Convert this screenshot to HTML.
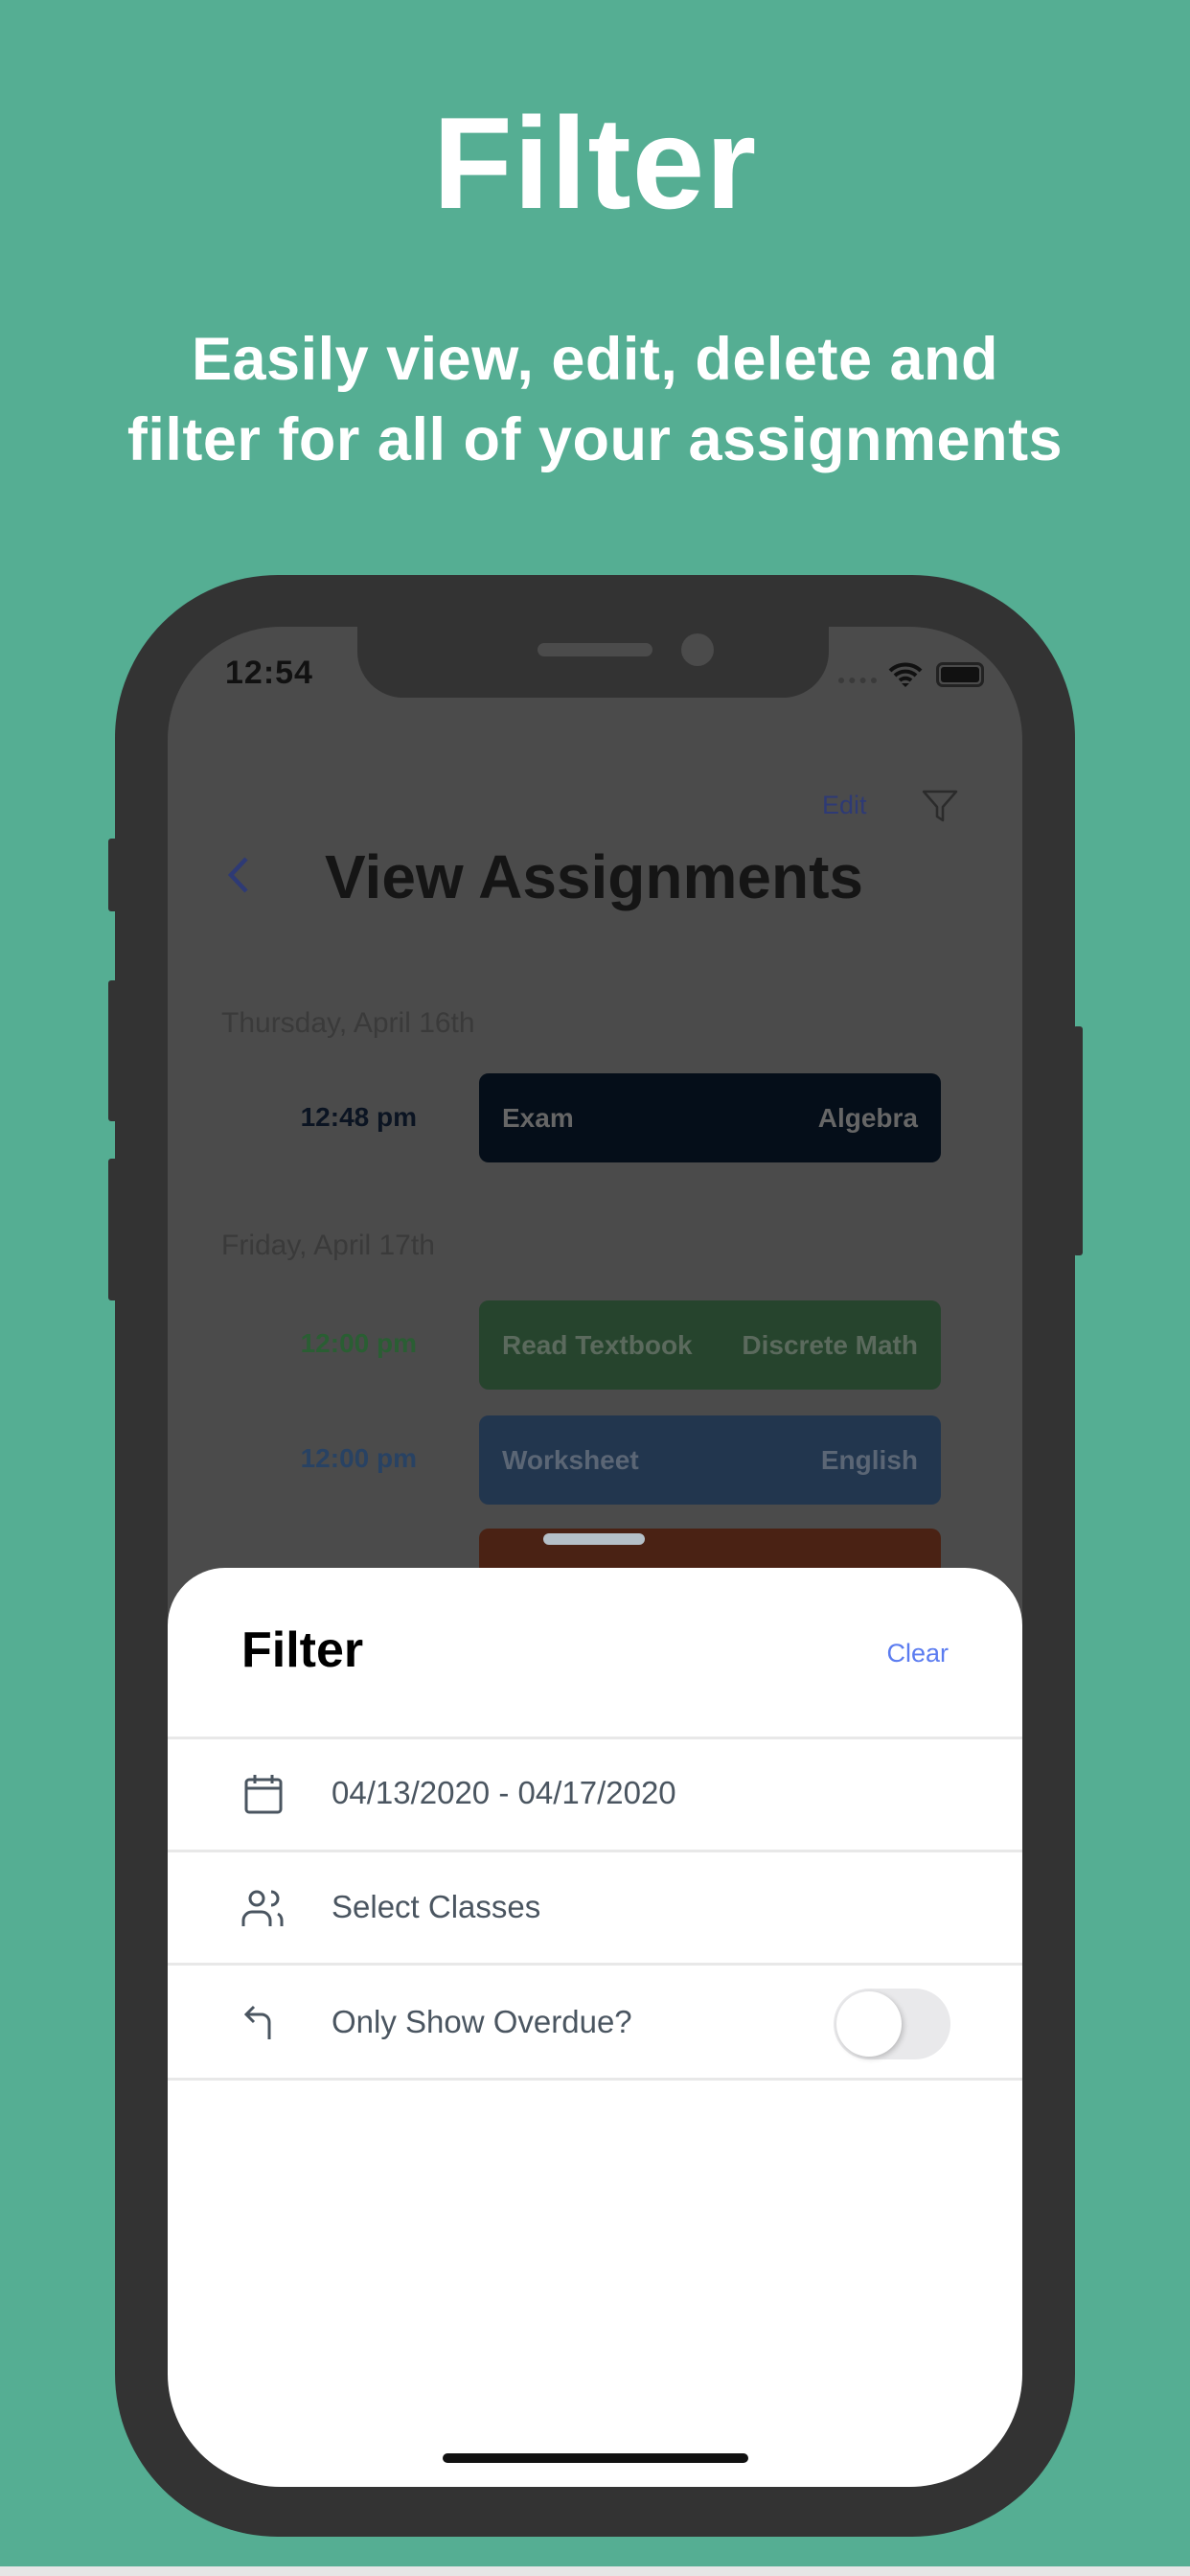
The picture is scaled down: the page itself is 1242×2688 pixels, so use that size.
<!DOCTYPE html>
<html><head><meta charset="utf-8"><style>
*{margin:0;padding:0;box-sizing:border-box}
body{width:1242px;height:2688px;background:#55ae93;position:relative;overflow:hidden;font-family:"Liberation Sans",sans-serif}
.a{position:absolute}
.h1{left:0;width:1242px;text-align:center;color:#fff;font-weight:bold}
</style></head><body>
<div class="a h1" style="top:92px;font-size:136px;letter-spacing:1px">Filter</div>
<div class="a h1" style="top:333px;font-size:63px;line-height:84px;letter-spacing:0.5px">Easily view, edit, delete and<br>filter for all of your assignments</div>

<div class="a" style="left:113px;top:875px;width:10px;height:76px;background:#333;border-radius:3px"></div>
<div class="a" style="left:113px;top:1023px;width:10px;height:147px;background:#333;border-radius:3px"></div>
<div class="a" style="left:113px;top:1209px;width:10px;height:148px;background:#333;border-radius:3px"></div>
<div class="a" style="left:1120px;top:1071px;width:10px;height:239px;background:#333;border-radius:3px"></div>
<div class="a" style="left:120px;top:600px;width:1002px;height:2047px;background:#333;border-radius:170px"></div>
<div class="a" style="left:175px;top:654px;width:892px;height:1941px;background:#4b4b4b;border-radius:118px;overflow:hidden">
  <div class="a" style="left:198px;top:0;width:492px;height:74px;background:#333;border-radius:0 0 48px 48px"></div>
  <div class="a" style="left:386px;top:17px;width:120px;height:14px;background:#4b4b4b;border-radius:7px"></div>
  <div class="a" style="left:536px;top:7px;width:34px;height:34px;background:#4b4b4b;border-radius:50%"></div>
  <div class="a" style="left:60px;top:29px;font-size:34px;font-weight:bold;color:#111;letter-spacing:1px">12:54</div>
  <div class="a" style="left:700px;top:53px;width:40px;height:6px;border-top:6px dotted #3a3a3a"></div>
  <svg class="a" style="left:752px;top:36px" width="36" height="28" viewBox="0 0 36 28"><path d="M2 10a23 23 0 0 1 32 0M7 15a16 16 0 0 1 22 0M12 20a9 9 0 0 1 12 0" stroke="#111" stroke-width="4" fill="none"/><path d="M14 23l4 4 4-4z" fill="#111"/></svg>
  <div class="a" style="left:802px;top:37px;width:50px;height:26px;border:3px solid #222;border-radius:7px;padding:2px"><div style="width:100%;height:100%;background:#111;border-radius:3px"></div></div>
  <div class="a" style="left:683px;top:171px;font-size:27px;color:#2e3a75">Edit</div>
  <svg class="a" style="left:787px;top:170px" width="38" height="34" viewBox="0 0 38 34"><path d="M2 2h34L22 18v14l-6-4V18z" stroke="#2b2b2b" stroke-width="2.5" fill="none" stroke-linejoin="round"/></svg>
  <svg class="a" style="left:62px;top:239px" width="24" height="40" viewBox="0 0 24 40"><path d="M20 3L4 20l16 17" stroke="#2e3a75" stroke-width="4.5" fill="none"/></svg>
  <div class="a" style="left:164px;top:224px;font-size:64px;font-weight:bold;color:#151515;letter-spacing:0px">View Assignments</div>
  <div class="a" style="left:56px;top:397px;font-size:30px;color:#3a3a3a">Thursday, April 16th</div>
  <div class="a" style="left:56px;top:629px;font-size:30px;color:#3a3a3a">Friday, April 17th</div>
  <div class="a" style="left:0;width:260px;text-align:right;top:496px;font-size:28px;font-weight:bold;color:#0b1422">12:48 pm</div>
  <div class="a" style="left:0;width:260px;text-align:right;top:732px;font-size:28px;font-weight:bold;color:#2a5e33">12:00 pm</div>
  <div class="a" style="left:0;width:260px;text-align:right;top:852px;font-size:28px;font-weight:bold;color:#284263">12:00 pm</div>
  <div class="a" style="left:325px;top:466px;width:482px;height:93px;background:#050e19;border-radius:10px;display:flex;justify-content:space-between;align-items:center;padding:0 24px;font-size:28px;font-weight:bold;color:#666"><span>Exam</span><span>Algebra</span></div>
  <div class="a" style="left:325px;top:703px;width:482px;height:93px;background:#26442d;border-radius:10px;display:flex;justify-content:space-between;align-items:center;padding:0 24px;font-size:28px;font-weight:bold;color:#5b6a5d"><span>Read Textbook</span><span>Discrete Math</span></div>
  <div class="a" style="left:325px;top:823px;width:482px;height:93px;background:#22364e;border-radius:10px;display:flex;justify-content:space-between;align-items:center;padding:0 24px;font-size:28px;font-weight:bold;color:#5b6675"><span>Worksheet</span><span>English</span></div>
  <div class="a" style="left:325px;top:941px;width:482px;height:93px;background:#4a2214;border-radius:10px"></div>
  <div class="a" style="left:392px;top:946px;width:106px;height:12px;background:#b5c0c8;border-radius:6px"></div>
  <div class="a" style="left:0;top:982px;width:892px;height:1000px;background:#fff;border-radius:60px 60px 0 0">
    <div class="a" style="left:77px;top:56px;font-size:52px;font-weight:bold;color:#000">Filter</div>
    <div class="a" style="right:77px;top:74px;font-size:27px;color:#5b7cf0">Clear</div>
    <div class="a" style="left:0;top:176px;width:892px;height:3px;background:#e8e8e8"></div>
    <div class="a" style="left:0;top:294px;width:892px;height:3px;background:#e8e8e8"></div>
    <div class="a" style="left:0;top:412px;width:892px;height:3px;background:#e8e8e8"></div>
    <div class="a" style="left:0;top:532px;width:892px;height:3px;background:#e8e8e8"></div>
    <svg class="a" style="left:77px;top:214px" width="44" height="44" viewBox="0 0 44 44"><rect x="5" y="7" width="36" height="34" rx="3" stroke="#4a5560" stroke-width="3" fill="none"/><path d="M5 16h36M14 2v9M32 2v9" stroke="#4a5560" stroke-width="3"/></svg>
    <div class="a" style="left:171px;top:216px;font-size:33px;color:#4a5560">04/13/2020 - 04/17/2020</div>
    <svg class="a" style="left:75px;top:334px" width="50" height="42" viewBox="0 0 50 42"><circle cx="18" cy="11" r="7" stroke="#4a5560" stroke-width="3" fill="none"/><path d="M4 40v-6a9 9 0 0 1 9-9h10a9 9 0 0 1 9 9v6M33 4a7 7 0 0 1 0 14M40 27a8 8 0 0 1 4 7v6" stroke="#4a5560" stroke-width="3" fill="none"/></svg>
    <div class="a" style="left:171px;top:335px;font-size:33px;color:#4a5560">Select Classes</div>
    <svg class="a" style="left:78px;top:454px" width="40" height="40" viewBox="0 0 40 40"><path d="M12 4L4 12l8 8M4 12h16a8 8 0 0 1 8 8v18" stroke="#4a5560" stroke-width="3" fill="none"/></svg>
    <div class="a" style="left:171px;top:455px;font-size:33px;color:#4a5560">Only Show Overdue?</div>
    <div class="a" style="left:695px;top:439px;width:122px;height:74px;background:#e9e9eb;border-radius:37px"><div style="position:absolute;left:3px;top:3px;width:68px;height:68px;background:#fff;border-radius:50%;box-shadow:2px 2px 6px rgba(0,0,0,.2)"></div></div>
  </div>
  <div class="a" style="left:287px;top:1906px;width:319px;height:10px;background:#111;border-radius:5px"></div>
</div>
<div class="a" style="left:0;top:2678px;width:1242px;height:10px;background:#e6e6e6"></div>
</body></html>
